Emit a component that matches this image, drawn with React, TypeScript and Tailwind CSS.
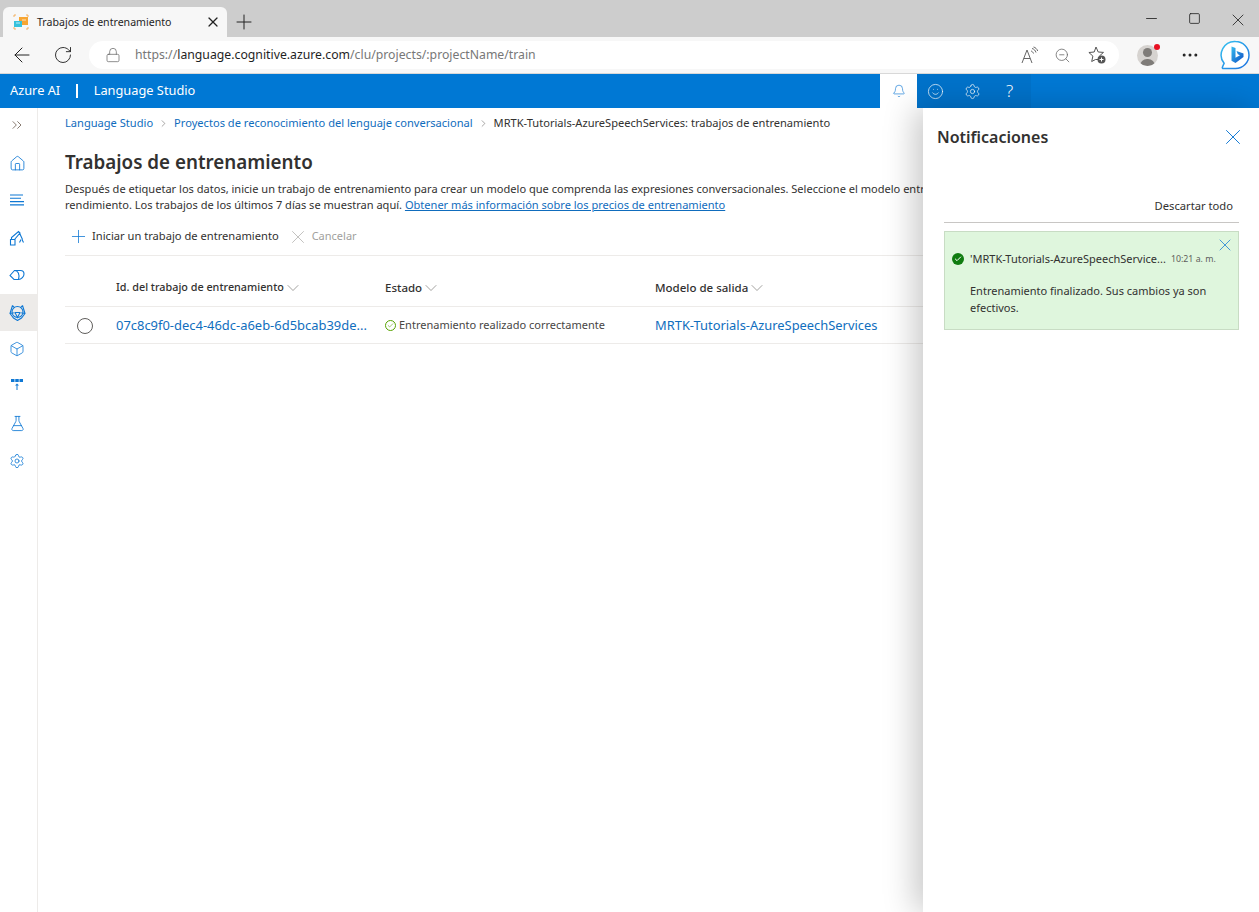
import {
  ArrowLeft,
  ChevronDown,
  ChevronsRight,
  Ellipsis,
  FlaskConical,
  Home,
  Lock,
  Minus,
  Plus,
  RotateCw,
  Settings,
  Smile,
  Square,
  X,
  ZoomOut,
  Bell,
  Box,
  Check,
} from "lucide-react";

const font = "font-['Noto_Sans','Open_Sans',sans-serif]";

function Favicon() {
  return (
    <svg width="16" height="16" viewBox="0 0 16 16">
      <path d="M1 3V1h2M13 1h2v2M15 13v2h-2M3 15H1v-2" fill="none" stroke="#f2a13c" strokeWidth="0.8" />
      <rect x="6" y="3" width="9" height="8" fill="#f7a531" />
      <rect x="1" y="7" width="8" height="6" fill="#37c2dc" />
      <path d="M3 9h4M9 6h4" stroke="#fff" strokeWidth="0.7" />
    </svg>
  );
}

function BingLogo() {
  return (
    <svg width="30" height="30" viewBox="0 0 30 30">
      <defs>
        <linearGradient id="ring" x1="0" y1="0" x2="1" y2="1">
          <stop offset="0" stopColor="#36c3f0" />
          <stop offset="1" stopColor="#1b6fe0" />
        </linearGradient>
        <linearGradient id="bee" x1="0" y1="0" x2="1" y2="1">
          <stop offset="0" stopColor="#37bdf0" />
          <stop offset="1" stopColor="#0f4fc4" />
        </linearGradient>
      </defs>
      <path
        d="M15.500 1.500a13.500 13.500 0 0 1 0 27H3.500c-1 0-1.500-.8-1-1.600l1.600-3.600A13.500 13.500 0 0 1 15.500 1.500z"
        fill="#fff"
        stroke="url(#ring)"
        strokeWidth="1.5"
      />
      <path d="M11.500 6.500l4 1.400v9.800l4.500-2.500-2.200-1-1.300-3.200 7 2.400v3.500L15.500 23l-4-2.200z" fill="url(#bee)" />
    </svg>
  );
}

function ReadAloud() {
  return (
    <svg width="18" height="18" viewBox="0 0 18 18" fill="none" stroke="#666" strokeWidth="1">
      <path d="M1 17L6 4l5 13M2.800 12.500h6.400" />
      <path d="M10 5c1.200.3 2 1.200 2.500 2.500M11 2.500c2 .5 3.300 1.800 4 4M12.500 1c2 .5 3.500 2 4.200 4" />
    </svg>
  );
}

function FavAdd() {
  return (
    <svg width="20" height="20" viewBox="0 0 20 20" fill="none" stroke="#555" strokeWidth="1">
      <path d="M9 2l2.200 5 5.300.4-4 3.500 1 3.600H8.500l-3.800 2 1.200-5.400-4-3.600 5.300-.5z" />
      <circle cx="14.500" cy="14.500" r="4" fill="#555" stroke="none" />
      <path d="M14.500 12.500v4M12.500 14.500h4" stroke="#fff" />
    </svg>
  );
}

function Avatar() {
  return (
    <div className="relative flex h-[21px] w-[21px] items-end justify-center overflow-hidden rounded-full bg-[#d6d3d0]">
      <div className="absolute left-[6px] top-[3px] h-[9px] w-[9px] rounded-full bg-[#7f7c79]" />
      <div className="h-[7px] w-[15px] rounded-t-full bg-[#7f7c79]" />
    </div>
  );
}

function LinesIcon() {
  return (
    <svg width="14" height="13" viewBox="0 0 14 13" stroke="#0f78d4" strokeWidth="1.100">
      <path d="M0 1h13M0 4.300h11M0 7.600h14M0 10.900h14" />
    </svg>
  );
}

function RobotArm() {
  return (
    <svg width="16" height="16" viewBox="0 0 16 16" fill="none" stroke="#0f78d4" strokeWidth="1.100">
      <path d="M1.500 15V9.500h4.500V15zM2.500 9.500V7.500L9.500 1.500l1.500 1.500L5.500 9.500M10.500 3l3 6.500M12 9.500l-1.500 3M13 9.500l1.500 3" />
    </svg>
  );
}

function Eraser() {
  return (
    <svg width="16" height="16" viewBox="0 0 16 16" fill="none" stroke="#0f78d4" strokeWidth="1.100">
      <path d="M1 8.500L5.500 3.500h6c2 0 3.500 1.500 3.500 3.500 0 2.500-2.500 5.500-5.500 5.500H5z" />
      <path d="M5.500 3.500c3.500 0 5.500 3.500 4 9" />
    </svg>
  );
}

function Brain() {
  return (
    <svg width="17" height="17" viewBox="0 0 17 17" fill="none" stroke="#0f78d4" strokeWidth="1.100">
      <circle cx="8.500" cy="8" r="5.500" />
      <path d="M3.500 1.500l2 2.200M13.500 1.500l-2 2.200M3.500 1.500L1 9.500l3.500 4.500 4 2.500 4-2.500 3.500-4.500-2.500-8" />
      <path d="M1 9.500l5-1 2.500 5 2.500-5 5 1M6 8.500h5" />
    </svg>
  );
}

function DeployIcon() {
  return (
    <svg width="14" height="14" viewBox="0 0 14 14" fill="#0f78d4">
      <rect x="1" y="1" width="3.500" height="3" />
      <rect x="5.250" y="1" width="3.500" height="3" />
      <rect x="9.500" y="1" width="3.500" height="3" />
      <path d="M6.500 12V7.500H5L7 5.500l2 2H7.500V12z" />
    </svg>
  );
}

const navItems = [
  { node: <Home size={17} strokeWidth={1.2} className="text-[#0f78d4]" />, h: "h-[37px]" },
  { node: <LinesIcon />, h: "h-[37px]" },
  { node: <RobotArm />, h: "h-[37px]" },
  { node: <Eraser />, h: "h-[38px]" },
  { node: <Brain />, h: "h-[37px] bg-[#edebe9]" },
  { node: <Box size={16} strokeWidth={1.2} className="text-[#0f78d4]" />, h: "h-[35px]" },
  { node: <DeployIcon />, h: "h-[38px]" },
  { node: <FlaskConical size={17} strokeWidth={1.2} className="text-[#0f78d4]" />, h: "h-[38px]" },
  { node: <Settings size={16} strokeWidth={1.2} className="text-[#0f78d4]" />, h: "h-[37px]" },
];

function SortChevron() {
  return <ChevronDown size={20} strokeWidth={0.7} className="ml-[-1px] text-[#605e5c]" />;
}

export default function App() {
  return (
    <div className={`relative h-[912px] w-[1259px] overflow-hidden bg-white text-[#323130] ${font}`}>
      {/* tab strip */}
      <div className="flex h-[37px] items-end bg-[#cdcdcd] pl-[3px]">
        <div className="flex h-[30px] w-[224px] items-center rounded-t-[6px] bg-[#f7f7f7] pl-[10px] pr-[6px]">
          <Favicon />
          <span className="ml-[8px] flex-1 pt-[1px] text-[10.6px] text-[#1f1f1f]">Trabajos de entrenamiento</span>
          <X size={16} strokeWidth={1.8} className="text-[#222]" />
        </div>
        <div className="flex h-[30px] w-[34px] items-center justify-center">
          <Plus size={24} strokeWidth={1} className="text-[#222]" />
        </div>
        <div className="ml-auto flex h-[37px] items-start pt-[10px]">
          <div className="flex w-[43px] justify-center">
            <Minus size={17} strokeWidth={1.2} className="text-[#222]" />
          </div>
          <div className="flex w-[43px] justify-center pt-[2px]">
            <Square size={13} strokeWidth={1.5} className="text-[#222]" />
          </div>
          <div className="flex w-[43px] justify-center">
            <X size={20} strokeWidth={1} className="text-[#222]" />
          </div>
        </div>
      </div>

      {/* address bar */}
      <div className="flex h-[37px] items-center border-b border-[#d8d8d8] bg-[#f7f7f7] pl-[10px]">
        <ArrowLeft size={24} strokeWidth={1} className="text-[#222]" />
        <RotateCw size={20} strokeWidth={1.1} className="ml-[19px] text-[#222]" />
        <div className="ml-[16px] flex h-[28px] w-[1030px] items-center rounded-full bg-white pl-[16px] pr-[12px]">
          <Lock size={16} strokeWidth={1.1} className="text-[#666]" />
          <span className="ml-[14px] flex-1 pt-[1px] text-[12.25px] text-[#777]">
            https://<span className="text-[#1f1f1f]">language.cognitive.azure.com</span>/clu/projects/:projectName/train
          </span>
          <ReadAloud />
          <ZoomOut size={17} strokeWidth={1.1} className="ml-[15px] text-[#666]" />
          <div className="ml-[16px]">
            <FavAdd />
          </div>
        </div>
        <div className="relative ml-[18px]">
          <Avatar />
          <div className="absolute right-[-2px] top-[-1px] h-[6px] w-[6px] rounded-full bg-[#e81123]" />
        </div>
        <Ellipsis size={20} strokeWidth={1.6} className="ml-[22px] text-[#222]" />
        <div className="ml-[20px]">
          <BingLogo />
        </div>
      </div>

      {/* app header */}
      <div className="flex h-[34px] items-center bg-[#0078d4] pl-[10px] text-[12.8px] text-white">
        <span>Azure AI</span>
        <span className="ml-[16px] h-[14px] w-[1.5px] bg-white" />
        <span className="ml-[16px]">Language Studio</span>
        <div className="ml-auto mr-[228px] flex h-[34px] items-center bg-[#0072ca]">
          <div className="flex h-[34px] w-[37px] items-center justify-center bg-white">
            <Bell size={14} strokeWidth={1.1} className="text-[#0f78d4]" />
          </div>
          <div className="flex w-[37px] justify-center">
            <Smile size={17} strokeWidth={1} />
          </div>
          <div className="flex w-[37px] justify-center">
            <Settings size={17} strokeWidth={1} />
          </div>
          <div className="flex w-[40px] justify-center pr-[3px] text-[17px] font-light">?</div>
        </div>
      </div>

      {/* body */}
      <div className="flex h-[804px]">
        <nav className="flex w-[38px] flex-col border-r border-[#edebe9]">
          <div className="flex h-[37px] items-center justify-center pb-[4px] pr-[4px]">
            <ChevronsRight size={16} strokeWidth={1.1} className="text-[#5c4a3c]" />
          </div>
          {navItems.map((item, i) => (
            <div key={i} className={`flex items-center justify-center pr-[3px] ${item.h}`}>
              {item.node}
            </div>
          ))}
        </nav>

        <main className="min-w-0 flex-1 pl-[27px]">
          <div className="flex h-[30px] items-center text-[11.1px] whitespace-nowrap">
            <span className="text-[#0f6cbd]">Language Studio</span>
            <ChevronDown size={11} className="mx-[5px] -rotate-90 text-[#605e5c]" strokeWidth={1.2} />
            <span className="text-[#0f6cbd]">Proyectos de reconocimiento del lenguaje conversacional</span>
            <ChevronDown size={11} className="mx-[5px] -rotate-90 text-[#605e5c]" strokeWidth={1.2} />
            <span>MRTK-Tutorials-AzureSpeechServices: trabajos de entrenamiento</span>
          </div>
          <h1 className="mt-[8px] text-[18.8px] leading-[32px] font-semibold">Trabajos de entrenamiento</h1>
          <p className="mt-[3px] w-[1100px] text-[11.05px] leading-[16px]">
            Después de etiquetar los datos, inicie un trabajo de entrenamiento para crear un modelo que comprenda las
            expresiones conversacionales. Seleccione el modelo entrenado para ver su
            <br />
            rendimiento. Los trabajos de los últimos 7 días se muestran aquí.{" "}
            <span className="text-[#0f6cbd] underline">Obtener más información sobre los precios de entrenamiento</span>
          </p>

          <div className="mt-[5px] flex h-[38px] items-center border-b border-[#edebe9] pl-[3px] text-[11.15px]">
            <Plus size={21} strokeWidth={0.9} className="text-[#0f78d4]" />
            <span className="ml-[3px]">Iniciar un trabajo de entrenamiento</span>
            <X size={22} strokeWidth={0.7} className="ml-[8px] text-[#a19f9d]" />
            <span className="ml-[3px] text-[11px] text-[#a19f9d]">Cancelar</span>
          </div>

          <div className="mt-[14px] flex h-[37px] items-center border-b border-[#edebe9] pb-[1px] text-[11.5px] font-medium">
            <div className="flex w-[320px] items-center pl-[51px] text-[10.8px]">
              Id. del trabajo de entrenamiento
              <SortChevron />
            </div>
            <div className="flex w-[270px] items-center">
              Estado
              <SortChevron />
            </div>
            <div className="flex items-center">
              Modelo de salida
              <SortChevron />
            </div>
          </div>
          <div className="flex h-[37px] items-center border-b border-[#edebe9] pt-[1px] whitespace-nowrap">
            <div className="flex w-[51px] pl-[12px]">
              <div className="h-[16px] w-[16px] rounded-full border border-[#605e5c]" />
            </div>
            <div className="w-[269px] text-[12.95px] text-[#106ebe]">07c8c9f0-dec4-46dc-a6eb-6d5bcab39de...</div>
            <div className="flex w-[270px] items-center text-[11px] text-[#484644]">
              <div className="mr-[3px] flex h-[11px] w-[11px] items-center justify-center rounded-full border border-[#57a300]">
                <Check size={7} strokeWidth={2} className="text-[#57a300]" />
              </div>
              Entrenamiento realizado correctamente
            </div>
            <div className="text-[12.9px] text-[#106ebe]">MRTK-Tutorials-AzureSpeechServices</div>
          </div>
        </main>
      </div>

      {/* notifications panel */}
      <aside className="absolute bottom-0 left-[923px] right-0 top-[108px] bg-white pl-[14px] pr-[20px] shadow-[-8px_0_30px_rgba(0,0,0,0.22)]">
        <div className="flex h-[58px] items-center justify-between">
          <h2 className="text-[16px] font-semibold">Notificaciones</h2>
          <X size={26} strokeWidth={0.9} className="mr-[-7px] text-[#0f78d4]" />
        </div>
        <div className="ml-[7px] mt-[27px] flex h-[30px] items-center justify-end border-b border-[#c8c6c4] pb-[3px] text-[11.2px]">
          <span className="pr-[6px]">Descartar todo</span>
        </div>
        <div className="relative ml-[7px] mt-[8px] h-[99px] border border-[#c8dcc4] bg-[#dff6dd] pl-[7px] pr-[8px] pt-[19px]">
          <X size={20} strokeWidth={0.9} className="absolute right-[3px] top-[3px] text-[#0f78d4]" />
          <div className="flex items-center whitespace-nowrap">
            <div className="flex h-[12px] w-[12px] items-center justify-center rounded-full bg-[#107c10]">
              <Check size={8} strokeWidth={3} className="text-white" />
            </div>
            <span className="ml-[6px] text-[11px]">'MRTK-Tutorials-AzureSpeechService...</span>
            <span className="ml-[5px] text-[8.8px] text-[#605e5c]">10:21 a. m.</span>
          </div>
          <p className="mt-[14px] pl-[18px] text-[11px] leading-[17px]">
            Entrenamiento finalizado. Sus cambios ya son efectivos.
          </p>
        </div>
      </aside>
    </div>
  );
}
